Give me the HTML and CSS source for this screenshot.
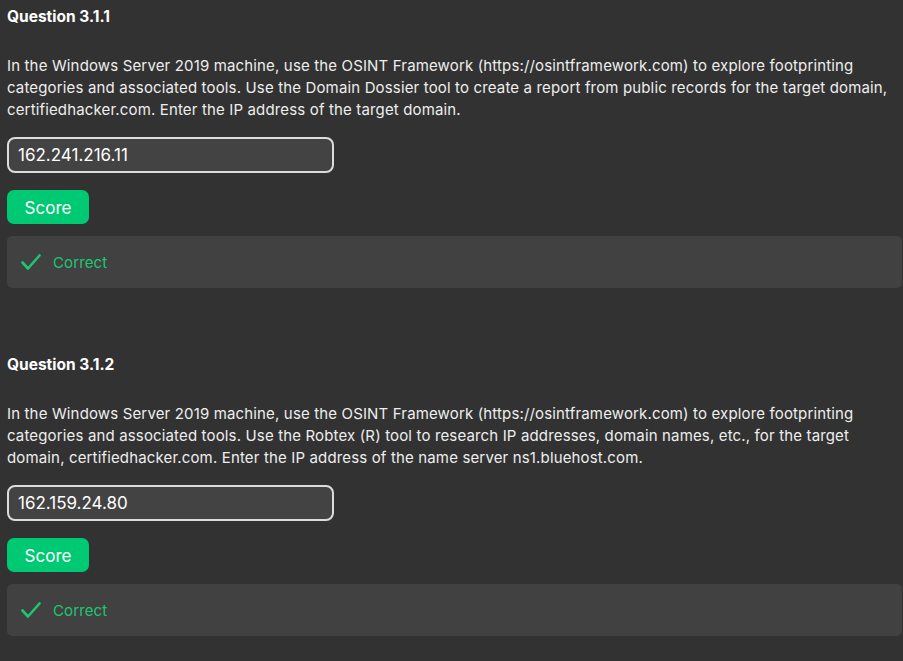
FILE: index.html
```html
<!DOCTYPE html>
<html>
<head>
<meta charset="utf-8">
<link rel="stylesheet" href="styles.css">
</head>
<body>
<div class="page">
  <section class="question">
    <h2 class="q-title">Question 3.1.1</h2>
    <p class="q-text">In the Windows Server 2019 machine, use the OSINT Framework (https://osintframework.com) to explore footprinting categories and associated tools. Use the Domain Dossier tool to create a report from public records for the target domain, certifiedhacker.com. Enter the IP address of the target domain.</p>
    <input class="answer" type="text" value="162.241.216.11" readonly>
    <button class="score-btn" type="button">Score</button>
    <div class="feedback">
      <svg class="check" width="20" height="17" viewBox="0 0 20 17"><path d="M1.5 8.5 L7 14.5 L18.5 1.5" fill="none" stroke="#1ec672" stroke-width="2.6" stroke-linecap="round" stroke-linejoin="round"/></svg>
      <span class="feedback-text">Correct</span>
    </div>
  </section>
  <section class="question">
    <h2 class="q-title">Question 3.1.2</h2>
    <p class="q-text">In the Windows Server 2019 machine, use the OSINT Framework (https://osintframework.com) to explore footprinting categories and associated tools. Use the Robtex (R) tool to research IP addresses, domain names, etc., for the target domain, certifiedhacker.com. Enter the IP address of the name server ns1.bluehost.com.</p>
    <input class="answer" type="text" value="162.159.24.80" readonly>
    <button class="score-btn" type="button">Score</button>
    <div class="feedback">
      <svg class="check" width="20" height="17" viewBox="0 0 20 17"><path d="M1.5 8.5 L7 14.5 L18.5 1.5" fill="none" stroke="#1ec672" stroke-width="2.6" stroke-linecap="round" stroke-linejoin="round"/></svg>
      <span class="feedback-text">Correct</span>
    </div>
  </section>
</div>
</body>
</html>
```

FILE: styles.css
```css
* { box-sizing: border-box; }
html, body {
  margin: 0;
  background: #323232;
}
body {
  font-family: Inter, "Noto Sans", sans-serif;
  color: #f0f0f0;
}
.page {
  padding: 7px 1px 0 7px;
}
.question {
  display: flex;
  flex-direction: column;
  align-items: flex-start;
}
.question + .question {
  margin-top: 67px;
}
.q-title {
  margin: 0;
  font-size: 15.5px;
  line-height: 20px;
  font-weight: 700;
  color: #ffffff;
}
.q-text {
  margin: 28px 0 0 0;
  font-size: 15px;
  line-height: 22px;
  letter-spacing: 0.15px;
  color: #eeeeee;
}
.answer {
  margin-top: 16px;
  width: 327px;
  height: 36px;
  border: 2px solid #dcdcdc;
  border-radius: 8px;
  background: #434343;
  color: #ffffff;
  font-family: Inter, "Noto Sans", sans-serif;
  font-size: 17px;
  padding: 0 9px;
  outline: none;
}
.score-btn {
  margin-top: 17px;
  width: 82px;
  height: 34px;
  border: none;
  border-radius: 7px;
  background: #00c974;
  color: #ffffff;
  font-family: Inter, "Noto Sans", sans-serif;
  font-size: 17px;
  padding: 1px 0 0 0;
}
.feedback {
  margin-top: 12px;
  align-self: stretch;
  height: 52px;
  background: #414141;
  border-radius: 5px;
  display: flex;
  align-items: center;
  padding-left: 14px;
  gap: 12px;
}
.check {
  display: block;
}
.feedback-text {
  font-size: 15px;
  letter-spacing: 0.1px;
  color: #1ec672;
}
```
